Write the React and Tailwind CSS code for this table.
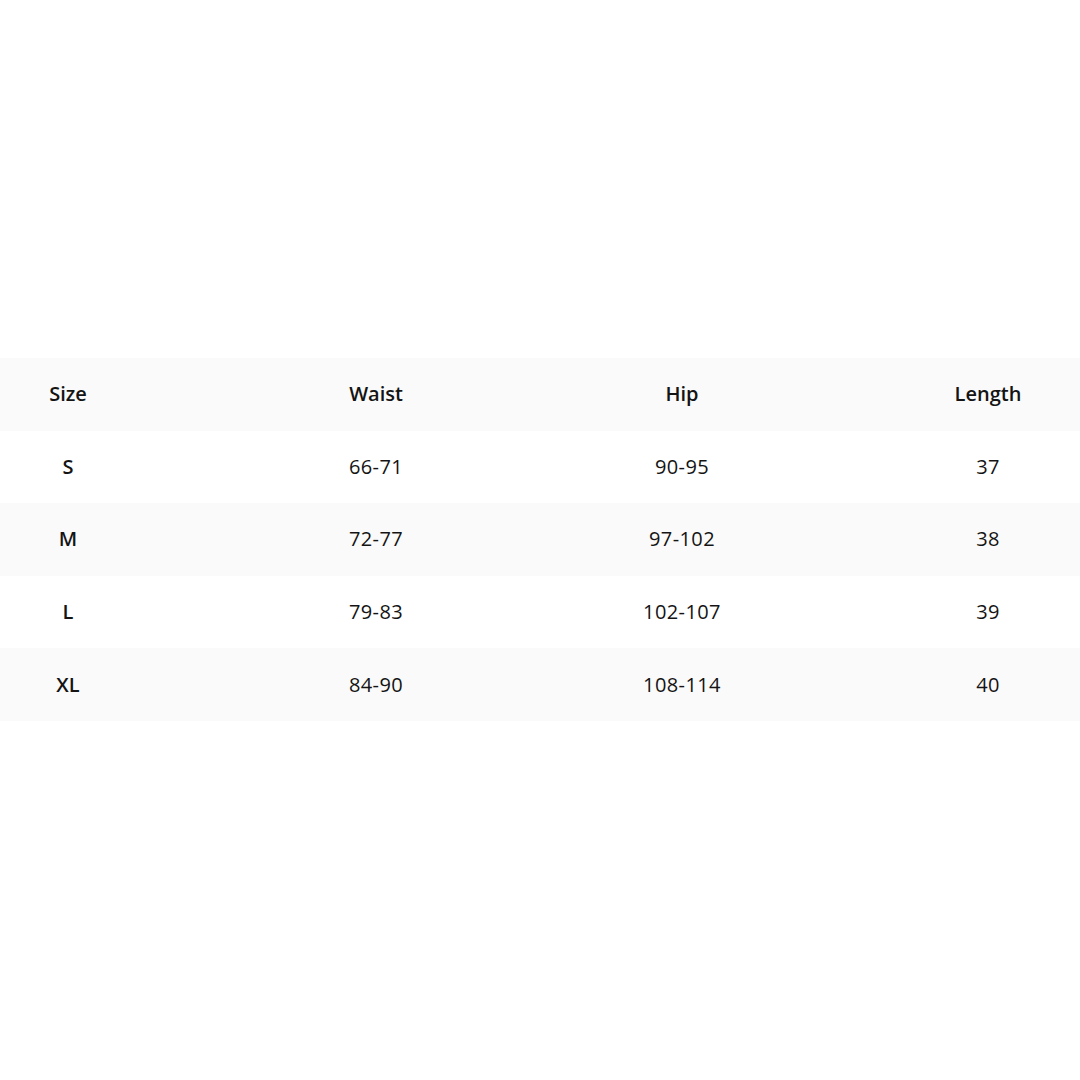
export default function App() {
  const rows = [
    ["S", "66-71", "90-95", "37"],
    ["M", "72-77", "97-102", "38"],
    ["L", "79-83", "102-107", "39"],
    ["XL", "84-90", "108-114", "40"],
  ];
  const font = { fontFamily: '"Open Sans", "Noto Sans", sans-serif' };
  const Row = ({ cells, bg, header }) => (
    <div className={`flex h-[72.6px] items-center pl-[24px] ${bg}`}>
      {cells.map((c, i) => (
        <div
          key={i}
          className={`w-[88px] text-center text-[20px] text-[#141414] ${
            i === 0 ? "" : i === 1 ? "ml-[220px]" : "ml-[218px]"
          } ${header || i === 0 ? "font-semibold" : "font-normal tracking-[0.4px]"}`}
        >
          {c}
        </div>
      ))}
    </div>
  );
  return (
    <div className="h-[1080px] w-[1080px] bg-white" style={font}>
      <div className="pt-[358px]">
        <Row cells={["Size", "Waist", "Hip", "Length"]} bg="bg-[#fafafa]" header />
        {rows.map((r, i) => (
          <Row key={i} cells={r} bg={i % 2 === 0 ? "bg-white" : "bg-[#fafafa]"} />
        ))}
      </div>
    </div>
  );
}
